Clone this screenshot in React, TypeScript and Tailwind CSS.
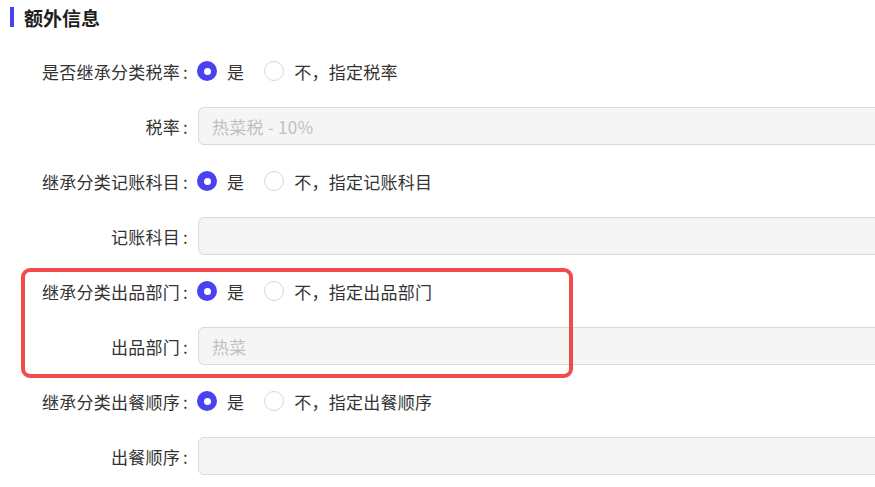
import React from "react";

const font = { fontFamily: '"Noto Sans CJK SC", "Noto Sans", sans-serif' };

function Radio({ checked, className = "" }: { checked?: boolean; className?: string }) {
  return checked ? (
    <span className={"w-[20px] h-[20px] rounded-full bg-[#4a41f0] flex items-center justify-center shrink-0 " + className}>
      <span className="w-[7px] h-[7px] rounded-full bg-white" />
    </span>
  ) : (
    <span className={"block w-[20px] h-[20px] rounded-full border border-[#d9d9d9] bg-white shrink-0 " + className} />
  );
}

function Label({ text }: { text: string }) {
  return (
    <div className="w-[188px] shrink-0 text-right text-[17px] tracking-[0.25px] text-[#333333] leading-none">
      {text}
      <span className="ml-[3px]">:</span>
    </div>
  );
}

function RadioRow({ label, alt }: { label: string; alt: string }) {
  return (
    <div className="flex items-center h-[38px] mb-[17px]">
      <Label text={label} />
      <div className="flex items-center ml-[9px]">
        <Radio checked />
        <span className="ml-[10px] text-[17px] tracking-[0.25px] text-[#333333] leading-none">是</span>
        <Radio className="ml-[20px]" />
        <span className="ml-[10px] text-[17px] tracking-[0.25px] text-[#333333] leading-none">{alt}</span>
      </div>
    </div>
  );
}

function InputRow({ label, value }: { label: string; value?: string }) {
  return (
    <div className="flex items-center h-[38px] mb-[17px]">
      <Label text={label} />
      <div className="ml-[10px] w-[720px] shrink-0 h-[38px] rounded-[6px] border border-[#d9d9d9] bg-[#f5f5f5] flex items-center pl-[13px] text-[17px] tracking-[0.25px] text-[#bfbfbf] leading-none">
        {value}
      </div>
    </div>
  );
}

export default function App() {
  return (
    <div className="relative w-[875px] h-[487px] overflow-hidden bg-white" style={font}>
      <div className="flex items-center pt-[7px] pl-[10px]">
        <span className="w-[4px] h-[20px] bg-[#4a41f0]" />
        <span className="ml-[10px] text-[19px] font-semibold text-[#1f1f1f] leading-none">额外信息</span>
      </div>
      <div className="mt-[25px]">
        <RadioRow label="是否继承分类税率" alt="不，指定税率" />
        <InputRow label="税率" value="热菜税 - 10%" />
        <RadioRow label="继承分类记账科目" alt="不，指定记账科目" />
        <InputRow label="记账科目" />
        <RadioRow label="继承分类出品部门" alt="不，指定出品部门" />
        <InputRow label="出品部门" value="热菜" />
        <RadioRow label="继承分类出餐顺序" alt="不，指定出餐顺序" />
        <InputRow label="出餐顺序" />
      </div>
      <div className="absolute left-[21px] top-[268px] w-[552px] h-[110px] border-[4px] border-[#f24b4b] rounded-[9px]" />
    </div>
  );
}
